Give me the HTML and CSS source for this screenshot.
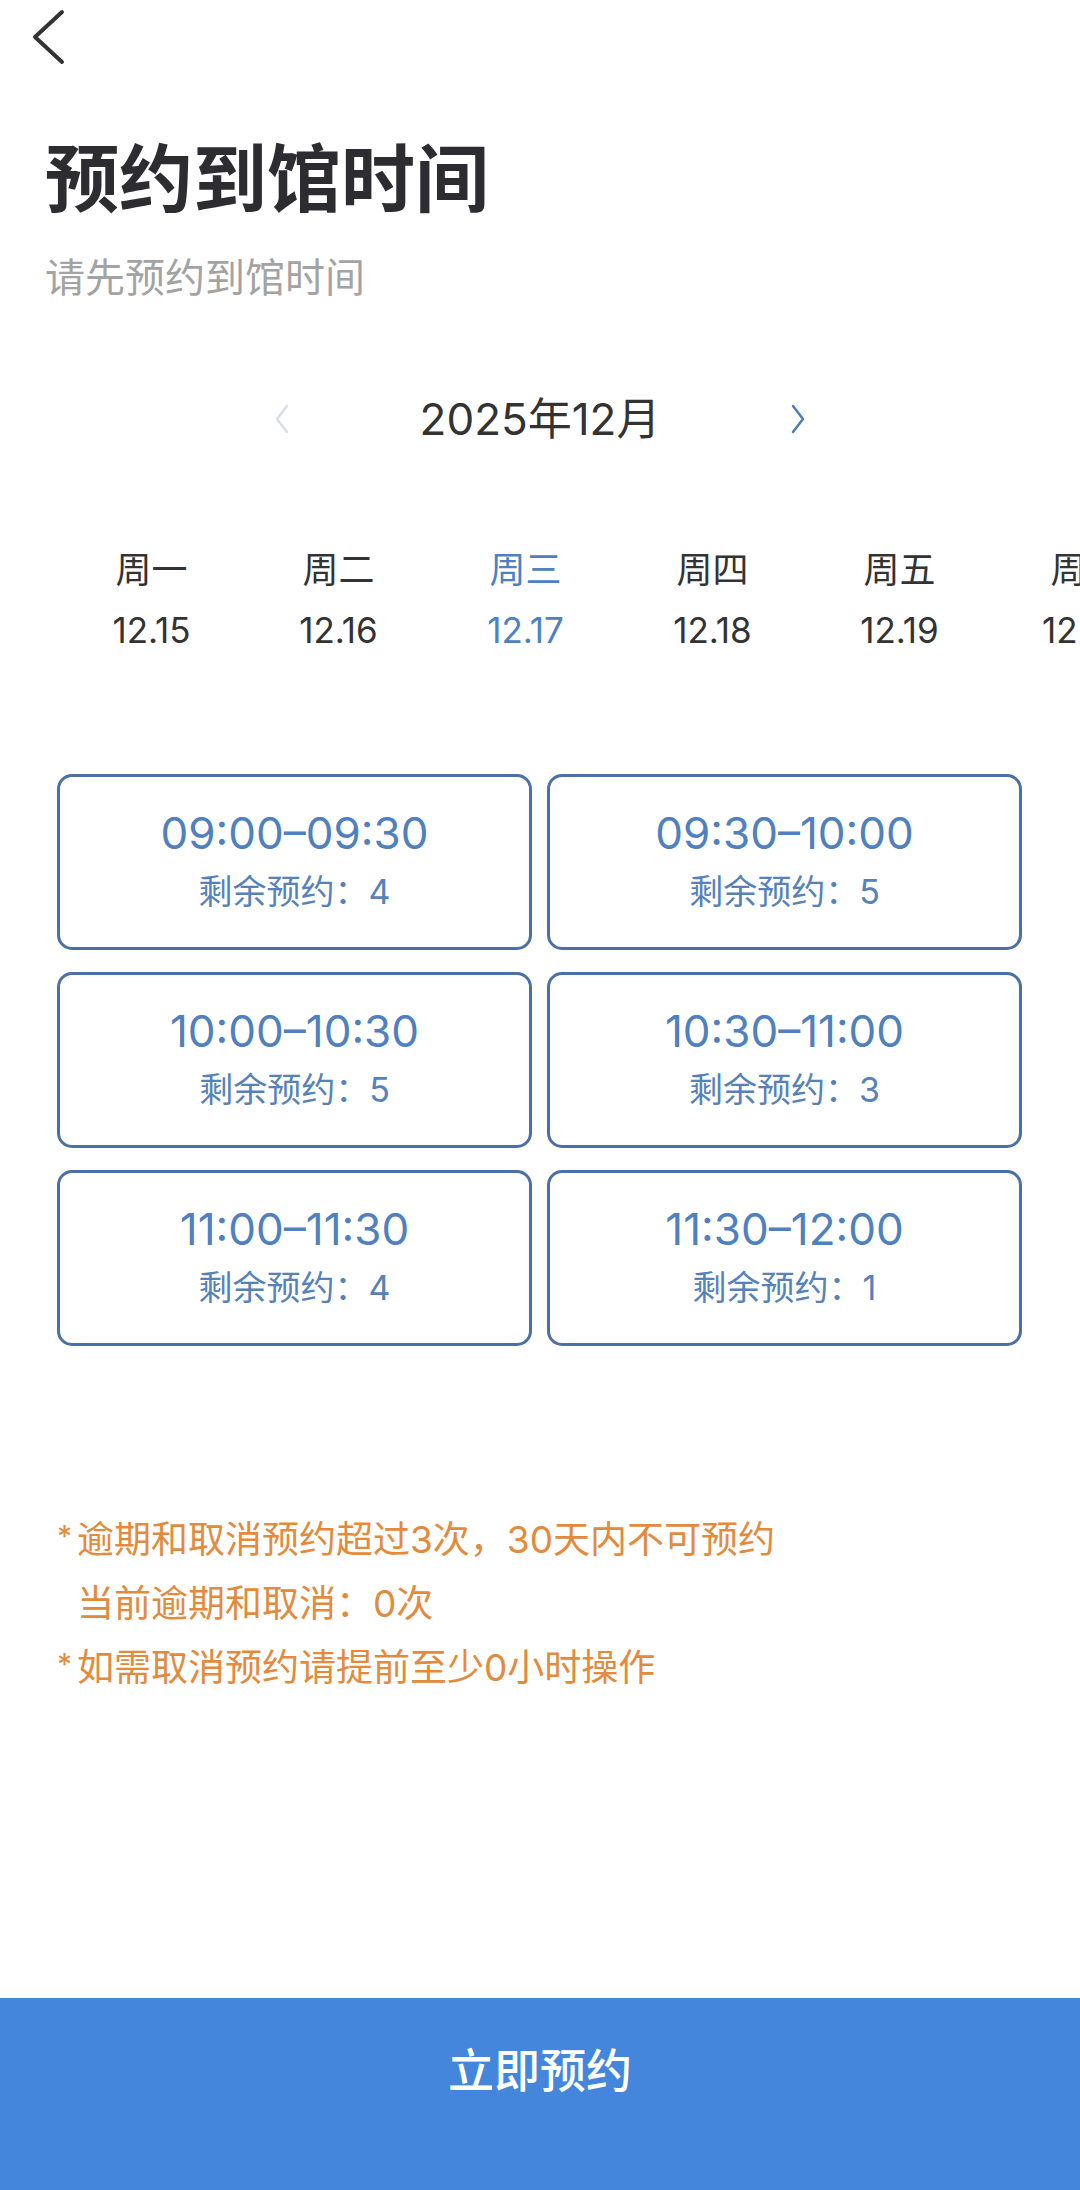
FILE: index.html
```html
<!DOCTYPE html>
<html lang="zh-CN">
<head>
    <meta charset="UTF-8">
    <meta name="viewport" content="width=device-width, initial-scale=1.0">
    <title>预约到馆时间</title>
    <link rel="stylesheet" href="styles.css">
</head>
<body>
    <div class="page">
        <div class="topbar">
            <svg class="back" width="40" height="56" viewBox="0 0 40 56">
                <polyline points="30,3 3,28 30,53" fill="none" stroke="#333" stroke-width="4" stroke-linecap="round" stroke-linejoin="round"/>
            </svg>
        </div>

        <div class="heading">
            <h1>预约到馆时间</h1>
            <p>请先预约到馆时间</p>
        </div>

        <div class="month-bar">
            <svg class="arrow" width="16" height="30" viewBox="0 0 16 30">
                <polyline points="13,2 3,15 13,28" fill="none" stroke="#d6dee7" stroke-width="2.5" stroke-linecap="round" stroke-linejoin="round"/>
            </svg>
            <div class="month-title">2025年12月</div>
            <svg class="arrow" width="16" height="30" viewBox="0 0 16 30">
                <polyline points="3,2 13,15 3,28" fill="none" stroke="#4d7cb6" stroke-width="2.5" stroke-linecap="round" stroke-linejoin="round"/>
            </svg>
        </div>

        <div class="week-list">
            <div class="day"><div class="day-name">周一</div><div class="day-date">12.15</div></div>
            <div class="day"><div class="day-name">周二</div><div class="day-date">12.16</div></div>
            <div class="day active"><div class="day-name">周三</div><div class="day-date">12.17</div></div>
            <div class="day"><div class="day-name">周四</div><div class="day-date">12.18</div></div>
            <div class="day"><div class="day-name">周五</div><div class="day-date">12.19</div></div>
            <div class="day"><div class="day-name">周六</div><div class="day-date">12.20</div></div>
        </div>

        <div class="slots">
            <div class="slot"><div class="slot-time">09:00–09:30</div><div class="slot-left">剩余预约：4</div></div>
            <div class="slot"><div class="slot-time">09:30–10:00</div><div class="slot-left">剩余预约：5</div></div>
            <div class="slot"><div class="slot-time">10:00–10:30</div><div class="slot-left">剩余预约：5</div></div>
            <div class="slot"><div class="slot-time">10:30–11:00</div><div class="slot-left">剩余预约：3</div></div>
            <div class="slot"><div class="slot-time">11:00–11:30</div><div class="slot-left">剩余预约：4</div></div>
            <div class="slot"><div class="slot-time">11:30–12:00</div><div class="slot-left">剩余预约：1</div></div>
        </div>

        <div class="notes">
            <div class="note"><span class="star">*</span>逾期和取消预约超过3次，30天内不可预约</div>
            <div class="note indent">当前逾期和取消：0次</div>
            <div class="note"><span class="star">*</span>如需取消预约请提前至少0小时操作</div>
        </div>

        <button class="submit" type="button">立即预约</button>
    </div>
</body>
</html>
```

FILE: styles.css
```css
body {
    margin: 0;
    padding: 0;
    background-color: #fff;
    font-family: Inter, "Noto Sans CJK SC", sans-serif;
    color: #333;
}

.page {
    min-height: 100vh;
    display: flex;
    flex-direction: column;
    overflow: hidden;
}

/* barre du haut */
.topbar {
    height: 75px;
    padding-left: 32px;
    box-sizing: border-box;
    padding-top: 9px;
}

.back {
    display: block;
}

.heading {
    padding: 0 45px;
    margin-top: 60px;
}

.heading h1 {
    margin: 0;
    font-size: 74px;
    line-height: 88px;
    font-weight: 700;
    color: #2d2d31;
}

.heading p {
    margin: 28px 0 0;
    font-size: 40px;
    line-height: 54px;
    color: #a3a3a3;
}

/* mois */
.month-bar {
    margin-top: 84px;
    display: flex;
    justify-content: center;
    align-items: center;
}

.month-title {
    width: 500px;
    text-align: center;
    font-size: 44px;
    line-height: 60px;
    color: #333;
}

.arrow {
    display: block;
}

/* jours */
.week-list {
    margin-top: 96px;
    display: flex;
    padding-left: 58px;
}

.day {
    flex: none;
    width: 187px;
    text-align: center;
}

.day-name {
    font-size: 36px;
    line-height: 50px;
}

.day-date {
    margin-top: 10px;
    font-size: 35px;
    line-height: 50px;
}

.day.active {
    color: #4d82c2;
}

/* créneaux */
.slots {
    margin-top: 119px;
    padding: 0 58px 0 57px;
    display: grid;
    grid-template-columns: 1fr 1fr;
    column-gap: 15px;
    row-gap: 22px;
}

.slot {
    height: 176px;
    box-sizing: border-box;
    border: 3px solid #4a70a7;
    border-radius: 15px;
    padding-top: 28px;
    text-align: center;
    color: #4f80bf;
}

.slot-time {
    font-size: 44px;
    line-height: 56px;
}

.slot-left {
    margin-top: 9px;
    font-size: 34px;
    line-height: 44px;
    color: #5582bb;
}

/* remarques */
.notes {
    margin-top: 162px;
    padding: 0 57px;
    color: #e38a3d;
}

.note {
    font-size: 37px;
    line-height: 64px;
}

.star {
    display: inline-block;
    width: 20px;
    font-size: 30px;
    vertical-align: top;
    line-height: 56px;
}

.note.indent {
    padding-left: 20px;
}

/* bouton */
.submit {
    margin-top: auto;
    height: 192px;
    width: 100%;
    border: none;
    background-color: #4386db;
    color: #fff;
    font-family: "Noto Sans CJK SC", sans-serif;
    font-size: 46px;
    font-weight: 500;
    line-height: 60px;
    padding: 39px 0 0;
    display: flex;
    justify-content: center;
    align-items: flex-start;
}
```
